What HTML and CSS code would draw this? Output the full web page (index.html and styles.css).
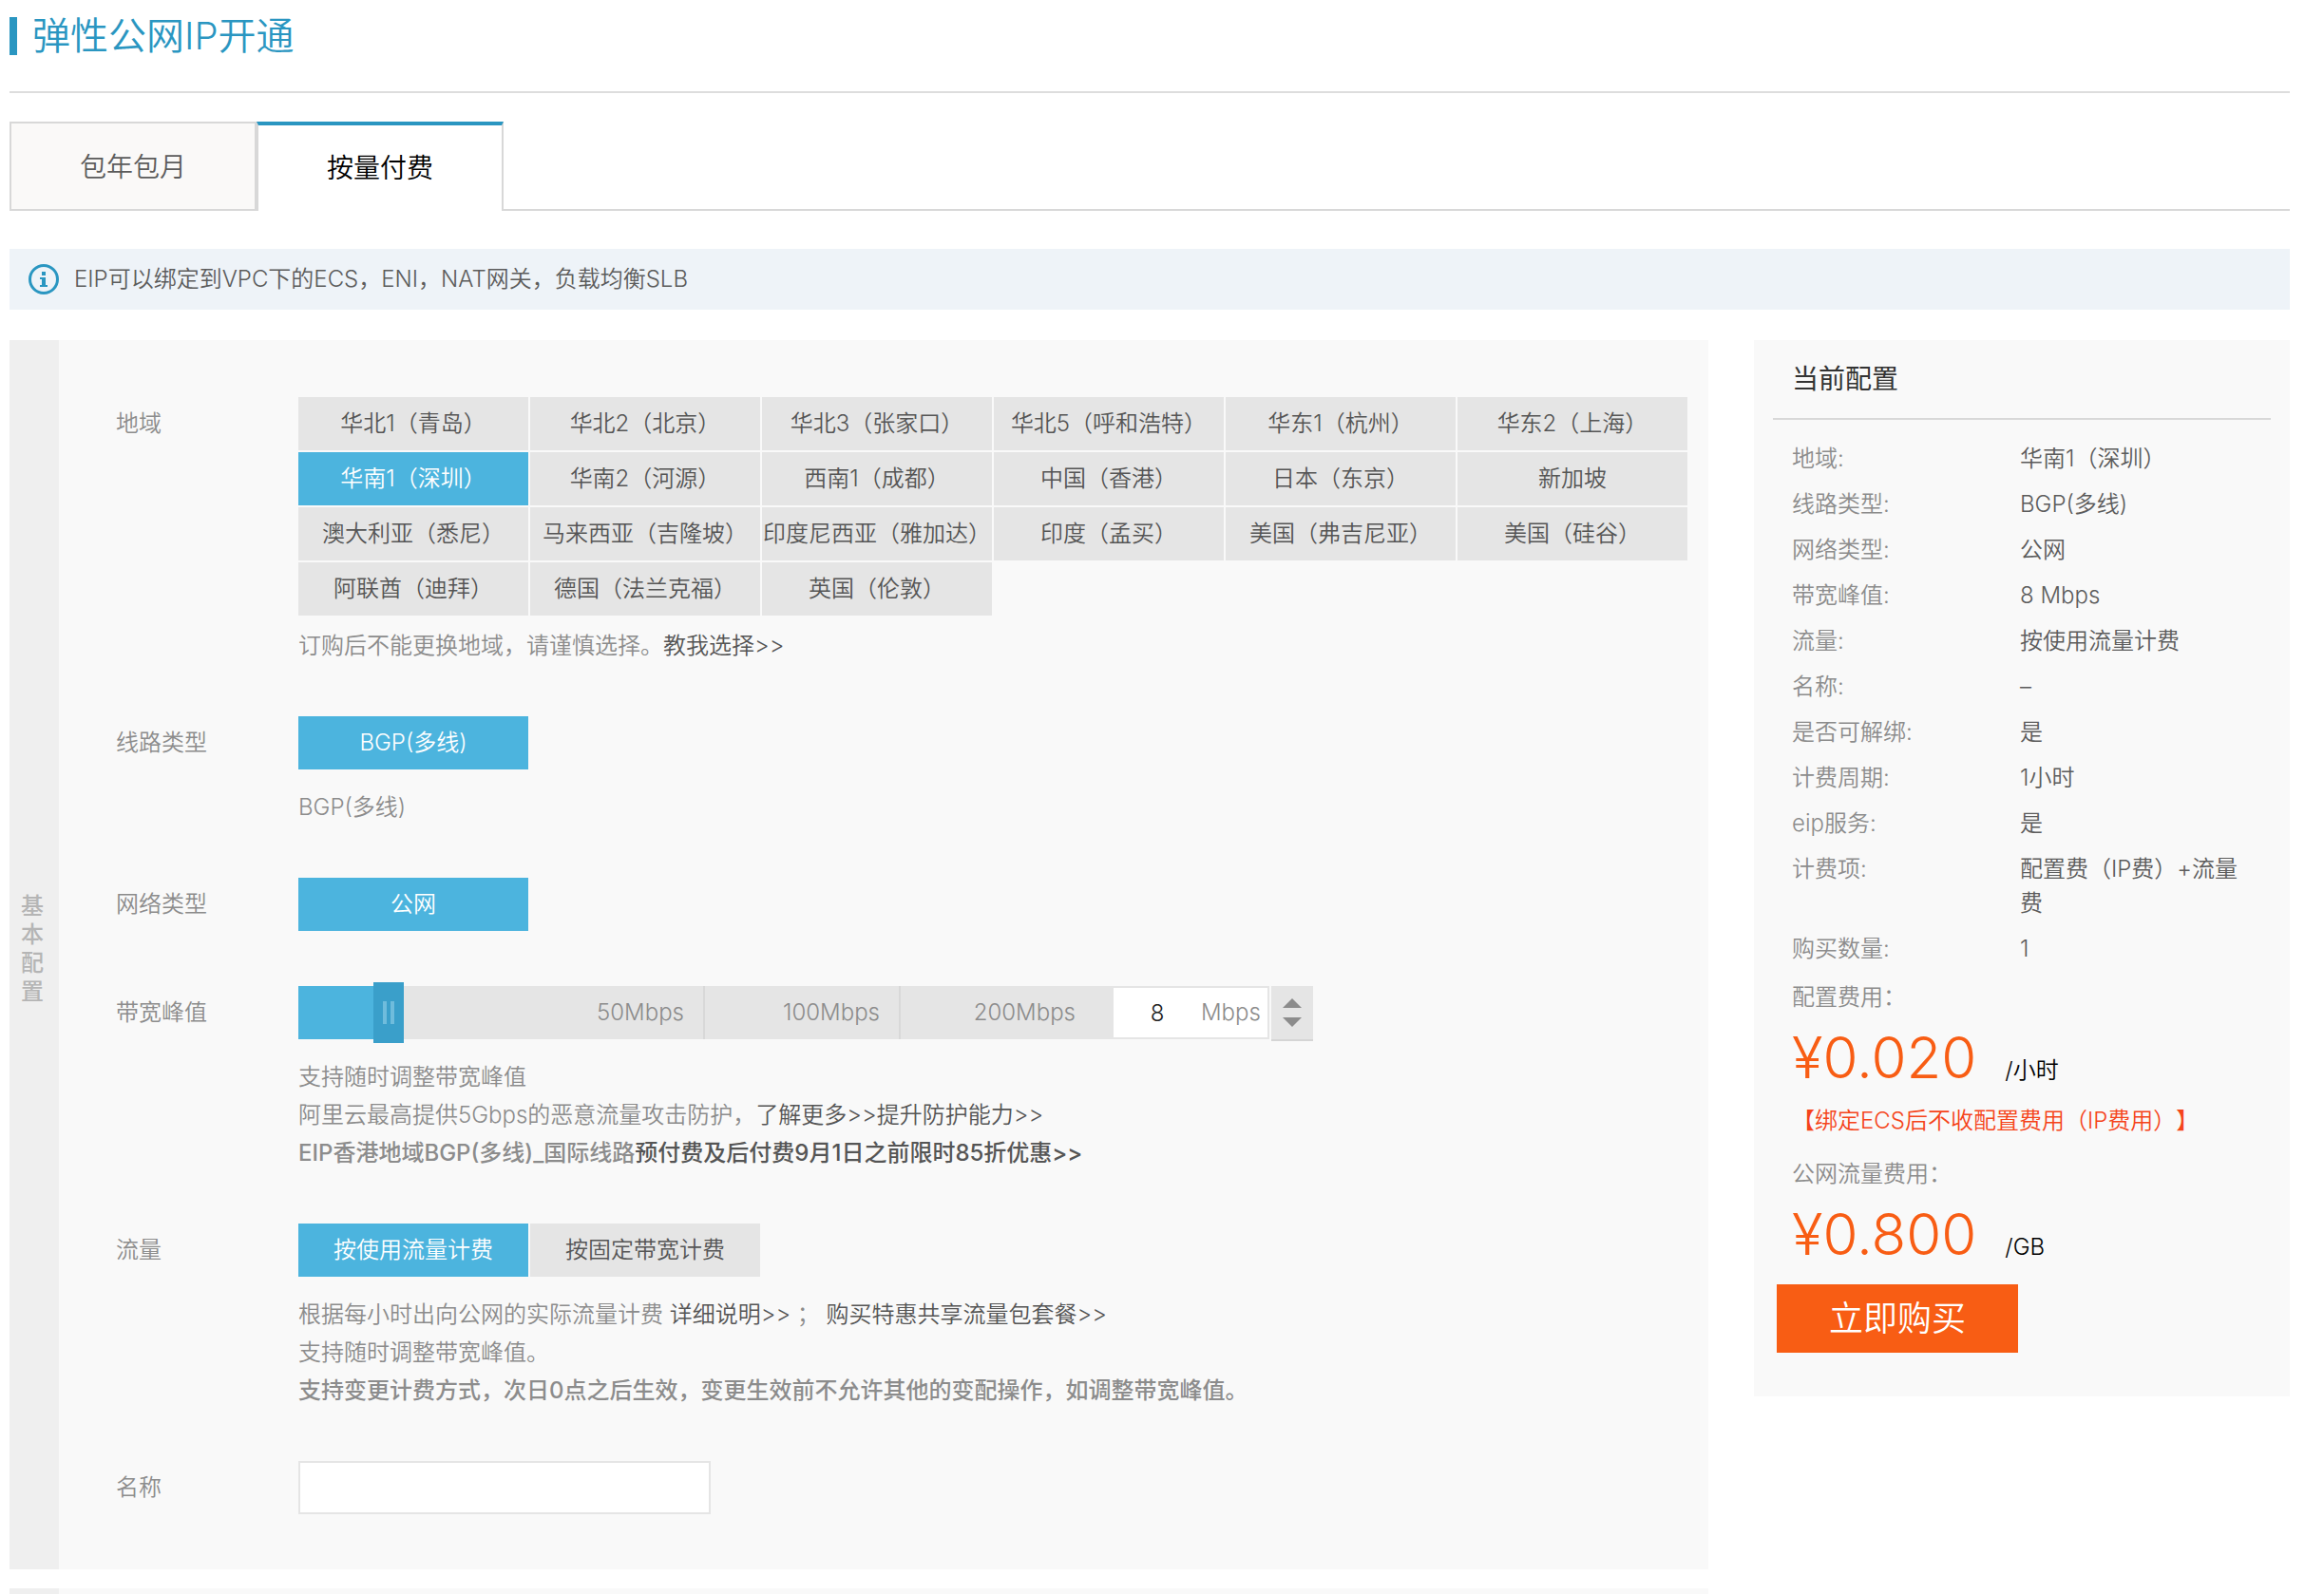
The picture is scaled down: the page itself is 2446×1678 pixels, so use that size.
FILE: index.html
```
<!DOCTYPE html>
<html lang="zh-CN">
<head>
<meta charset="utf-8">
<title>弹性公网IP开通</title>
<link rel="stylesheet" href="styles.css">
</head>
<body>
<header class="page-header">
  <h1 class="page-title">弹性公网IP开通</h1>
</header>

<nav class="tabs">
  <button type="button" class="tab">包年包月</button>
  <button type="button" class="tab tab-active">按量付费</button>
</nav>

<p class="notice">
  <svg class="notice-icon" viewBox="0 0 32 32" aria-hidden="true">
    <circle cx="16" cy="16" r="14.5" fill="none" stroke="currentColor" stroke-width="3"/>
    <path d="M14 8h4v4h-4zM12 14h6v8h2v2h-8v-2h2v-6h-2z" fill="currentColor"/>
  </svg>
  <span>EIP可以绑定到VPC下的ECS，ENI，NAT网关，负载均衡SLB</span>
</p>

<div class="layout">
  <main class="main">
    <section class="panel">
      <h2 class="panel-side">基本配置</h2>
      <form class="panel-body">
        <div class="row">
          <span class="row-label">地域</span>
          <div class="row-content">
            <div class="options">
              <button type="button" class="option">华北1（青岛）</button>
              <button type="button" class="option">华北2（北京）</button>
              <button type="button" class="option">华北3（张家口）</button>
              <button type="button" class="option">华北5（呼和浩特）</button>
              <button type="button" class="option">华东1（杭州）</button>
              <button type="button" class="option">华东2（上海）</button>
              <button type="button" class="option option-on">华南1（深圳）</button>
              <button type="button" class="option">华南2（河源）</button>
              <button type="button" class="option">西南1（成都）</button>
              <button type="button" class="option">中国（香港）</button>
              <button type="button" class="option">日本（东京）</button>
              <button type="button" class="option">新加坡</button>
              <button type="button" class="option">澳大利亚（悉尼）</button>
              <button type="button" class="option">马来西亚（吉隆坡）</button>
              <button type="button" class="option">印度尼西亚（雅加达）</button>
              <button type="button" class="option">印度（孟买）</button>
              <button type="button" class="option">美国（弗吉尼亚）</button>
              <button type="button" class="option">美国（硅谷）</button>
              <button type="button" class="option">阿联酋（迪拜）</button>
              <button type="button" class="option">德国（法兰克福）</button>
              <button type="button" class="option">英国（伦敦）</button>
            </div>
            <p class="hint hint-near">订购后不能更换地域，请谨慎选择。<a href="#">教我选择&gt;&gt;</a></p>
          </div>
        </div>

        <div class="row">
          <span class="row-label">线路类型</span>
          <div class="row-content">
            <div class="options">
              <button type="button" class="option option-on">BGP(多线)</button>
            </div>
            <p class="hint">BGP(多线)</p>
          </div>
        </div>

        <div class="row">
          <span class="row-label">网络类型</span>
          <div class="row-content">
            <div class="options">
              <button type="button" class="option option-on">公网</button>
            </div>
          </div>
        </div>

        <div class="row">
          <label class="row-label" for="bandwidth">带宽峰值</label>
          <div class="row-content">
            <div class="bandwidth">
              <div class="slider">
                <span class="tick tick-first">50Mbps</span>
                <span class="tick">100Mbps</span>
                <span class="tick tick-last">200Mbps</span>
                <span class="slider-fill" style="width: 11%"></span>
                <input class="slider-input" type="range" min="0" max="1000" value="96" aria-label="带宽峰值">
              </div>
              <div class="amount">
                <input class="amount-input" id="bandwidth" type="text" value="8">
                <span class="amount-unit">Mbps</span>
              </div>
              <div class="stepper">
                <button type="button" class="step step-up" aria-label="增加"></button>
                <button type="button" class="step step-down" aria-label="减少"></button>
              </div>
            </div>
            <p class="hint">支持随时调整带宽峰值<br>
              阿里云最高提供5Gbps的恶意流量攻击防护，<a href="#">了解更多&gt;&gt;</a><a href="#">提升防护能力&gt;&gt;</a><br>
              <strong>EIP香港地域BGP(多线)_国际线路<a href="#">预付费及后付费9月1日之前限时85折优惠&gt;&gt;</a></strong></p>
          </div>
        </div>

        <div class="row">
          <span class="row-label">流量</span>
          <div class="row-content">
            <div class="options">
              <button type="button" class="option option-on">按使用流量计费</button>
              <button type="button" class="option">按固定带宽计费</button>
            </div>
            <p class="hint">根据每小时出向公网的实际流量计费 <a href="#">详细说明&gt;&gt;</a> ； <a href="#">购买特惠共享流量包套餐&gt;&gt;</a><br>
              支持随时调整带宽峰值。<br>
              <strong>支持变更计费方式，次日0点之后生效，变更生效前不允许其他的变配操作，如调整带宽峰值。</strong></p>
          </div>
        </div>

        <div class="row">
          <label class="row-label" for="name">名称</label>
          <div class="row-content">
            <input class="name-input" id="name" type="text">
          </div>
        </div>
      </form>
    </section>

    <section class="panel">
      <div class="panel-side panel-side-empty"></div>
      <div class="panel-rest"></div>
    </section>
  </main>

  <aside class="summary">
    <h2 class="summary-title">当前配置</h2>
    <dl class="summary-list">
      <dt>地域:</dt><dd>华南1（深圳）</dd>
      <dt>线路类型:</dt><dd>BGP(多线)</dd>
      <dt>网络类型:</dt><dd>公网</dd>
      <dt>带宽峰值:</dt><dd>8 Mbps</dd>
      <dt>流量:</dt><dd>按使用流量计费</dd>
      <dt>名称:</dt><dd>–</dd>
      <dt>是否可解绑:</dt><dd>是</dd>
      <dt>计费周期:</dt><dd>1小时</dd>
      <dt>eip服务:</dt><dd>是</dd>
      <dt>计费项:</dt><dd>配置费（IP费）+流量费</dd>
      <dt>购买数量:</dt><dd>1</dd>
    </dl>
    <div class="fee">
      <p class="fee-label">配置费用：</p>
      <p class="fee-price"><span class="price">¥0.020</span><span>/小时</span></p>
      <p class="fee-note">【绑定ECS后不收配置费用（IP费用）】</p>
    </div>
    <div class="fee">
      <p class="fee-label">公网流量费用：</p>
      <p class="fee-price"><span class="price">¥0.800</span><span>/GB</span></p>
    </div>
    <button type="button" class="buy">立即购买</button>
  </aside>
</div>
</body>
</html>
```
FILE: styles.css
```
* {
  box-sizing: border-box;
}

body,
h1,
h2,
p,
dl,
dd {
  margin: 0;
}

body {
  padding: 18px 36px 0 10px;
  background: #fff;
  color: #5c5c5c;
  font-family: Inter, "Noto Sans CJK SC", sans-serif;
  font-size: 24px;
  font-weight: 350;
  line-height: 40px;
  text-spacing-trim: space-all;
}

button,
input {
  margin: 0;
  padding: 0;
  border: 0;
  border-radius: 0;
  background: none;
  color: inherit;
  font: inherit;
}

a {
  color: #555;
  text-decoration: none;
}

.page-header {
  padding-bottom: 38px;
  border-bottom: 2px solid #ddd;
}

.page-title {
  padding-left: 16px;
  border-left: 8px solid #2a96c1;
  color: #2a96c1;
  font-size: 40px;
  font-weight: 350;
  line-height: 40px;
}

.tabs {
  display: flex;
  margin-top: 30px;
}

.tabs::after {
  flex: 1;
  border-bottom: 2px solid #d8d8d8;
  content: "";
}

.tab {
  width: 260px;
  height: 94px;
  padding-top: 2px;
  border: 2px solid #d8d8d8;
  background: #faf9f8;
  font-size: 28px;
}

.tab-active {
  padding-top: 0;
  border-top: 4px solid #2a96c1;
  border-bottom: 0;
  background: #fff;
  color: #000;
}

.notice {
  display: flex;
  align-items: center;
  gap: 16px;
  height: 64px;
  margin: 40px 0 32px;
  padding-left: 20px;
  background: #eef3f8;
}

.notice-icon {
  width: 32px;
  height: 32px;
  color: #2a96c1;
}

.layout {
  display: flex;
  align-items: flex-start;
  gap: 48px;
}

.main {
  display: flex;
  flex: 1;
  flex-direction: column;
  gap: 20px;
}

.panel {
  display: flex;
  background: #f9f9f9;
}

.panel-side {
  display: flex;
  flex: none;
  align-items: center;
  justify-content: center;
  width: 52px;
  padding: 0 16px 12px 12px;
  background: #efefef;
  color: #b5b5b5;
  font-size: 24px;
  font-weight: 500;
  line-height: 30px;
  word-break: break-all;
}

.panel-side-empty {
  padding: 0;
}

.panel-body {
  flex: 1;
  padding: 60px 22px 0 60px;
}

.panel-rest {
  flex: 1;
  min-height: 6px;
}

.row {
  display: flex;
  padding-bottom: 58px;
}

.row:has(.hint) {
  padding-bottom: 54px;
}

.row-label {
  flex: none;
  width: 192px;
  color: #8c8c8c;
  line-height: 56px;
}

.row-content {
  flex: 1;
}

.options {
  display: grid;
  grid-template-columns: repeat(auto-fill, 242px);
  gap: 2px;
}

.option {
  height: 56px;
  background: #e5e5e5;
  color: #555;
  white-space: nowrap;
}

.option-on {
  background: #4cb4de;
  color: #fff;
}

.hint {
  margin-top: 20px;
  color: #8c8c8c;
}

.hint-near {
  margin-top: 12px;
}

.hint strong {
  font-weight: 500;
}

.bandwidth {
  display: flex;
  height: 56px;
}

.slider {
  display: flex;
  position: relative;
  width: 856px;
  height: 56px;
  background: #e5e5e5;
  color: #8c8c8c;
  line-height: 56px;
  text-align: right;
}

.tick {
  width: 206px;
  padding-right: 20px;
  border-right: 2px solid #d8d8d8;
}

.tick-first {
  width: 428px;
}

.tick-last {
  width: 222px;
  padding-right: 38px;
  border: 0;
}

.slider-fill {
  position: absolute;
  top: 0;
  bottom: 0;
  left: 0;
  background: #4cb4de;
}

.slider-input {
  position: absolute;
  top: -4px;
  left: 0;
  width: 100%;
  height: 64px;
  appearance: none;
}

.slider-input::-webkit-slider-thumb {
  width: 32px;
  height: 64px;
  border: 0;
  border-radius: 0;
  background:
    linear-gradient(#6fbcdc, #6fbcdc) 10px 20px / 4px 24px no-repeat,
    linear-gradient(#6fbcdc, #6fbcdc) 18px 20px / 4px 24px no-repeat,
    #3a9fca;
  appearance: none;
}

.amount {
  display: flex;
  align-items: center;
  width: 166px;
  height: 56px;
  border: 2px solid #e5e5e5;
  background: #fff;
}

.amount-input {
  width: 92px;
  height: 52px;
  color: #222;
  text-align: center;
}

.amount-unit {
  color: #8c8c8c;
}

.stepper {
  display: flex;
  flex-direction: column;
  align-items: center;
  justify-content: center;
  gap: 10px;
  width: 44px;
  height: 58px;
  margin-left: 2px;
  border-bottom: 2px solid #d5d5d5;
  background: #e5e5e5;
}

.step {
  width: 20px;
  height: 10px;
  background: #8c8c8c;
}

.step-up {
  clip-path: polygon(50% 0, 100% 100%, 0 100%);
}

.step-down {
  clip-path: polygon(0 0, 100% 0, 50% 100%);
}

.name-input {
  display: block;
  width: 434px;
  height: 56px;
  padding: 0 12px;
  border: 2px solid #e5e5e5;
  background: #fff;
}

.summary {
  flex: none;
  width: 564px;
  padding: 0 20px 46px;
  background: #f9f9f9;
}

.summary-title {
  padding: 21px 20px;
  border-bottom: 2px solid #d8d8d8;
  color: #333;
  font-size: 28px;
  font-weight: 400;
  line-height: 40px;
}

.summary-list {
  display: grid;
  grid-template-columns: 240px 240px;
  row-gap: 12px;
  padding: 23px 20px 0;
  line-height: 36px;
}

.summary-list dt,
.fee-label {
  color: #8c8c8c;
}

.fee {
  padding: 15px 20px 0;
  line-height: 36px;
}

.fee + .fee {
  padding-top: 20px;
}

.fee-price {
  display: flex;
  align-items: baseline;
  gap: 30px;
  height: 94px;
  color: #000;
  line-height: 90px;
}

.price {
  color: #f85d14;
  font-size: 60px;
}

.fee-note {
  color: #f5441a;
  white-space: nowrap;
}

.buy {
  display: block;
  width: 254px;
  height: 72px;
  margin: 4px 0 0 4px;
  background: #f85d14;
  color: #fff;
  font-size: 36px;
}
```
